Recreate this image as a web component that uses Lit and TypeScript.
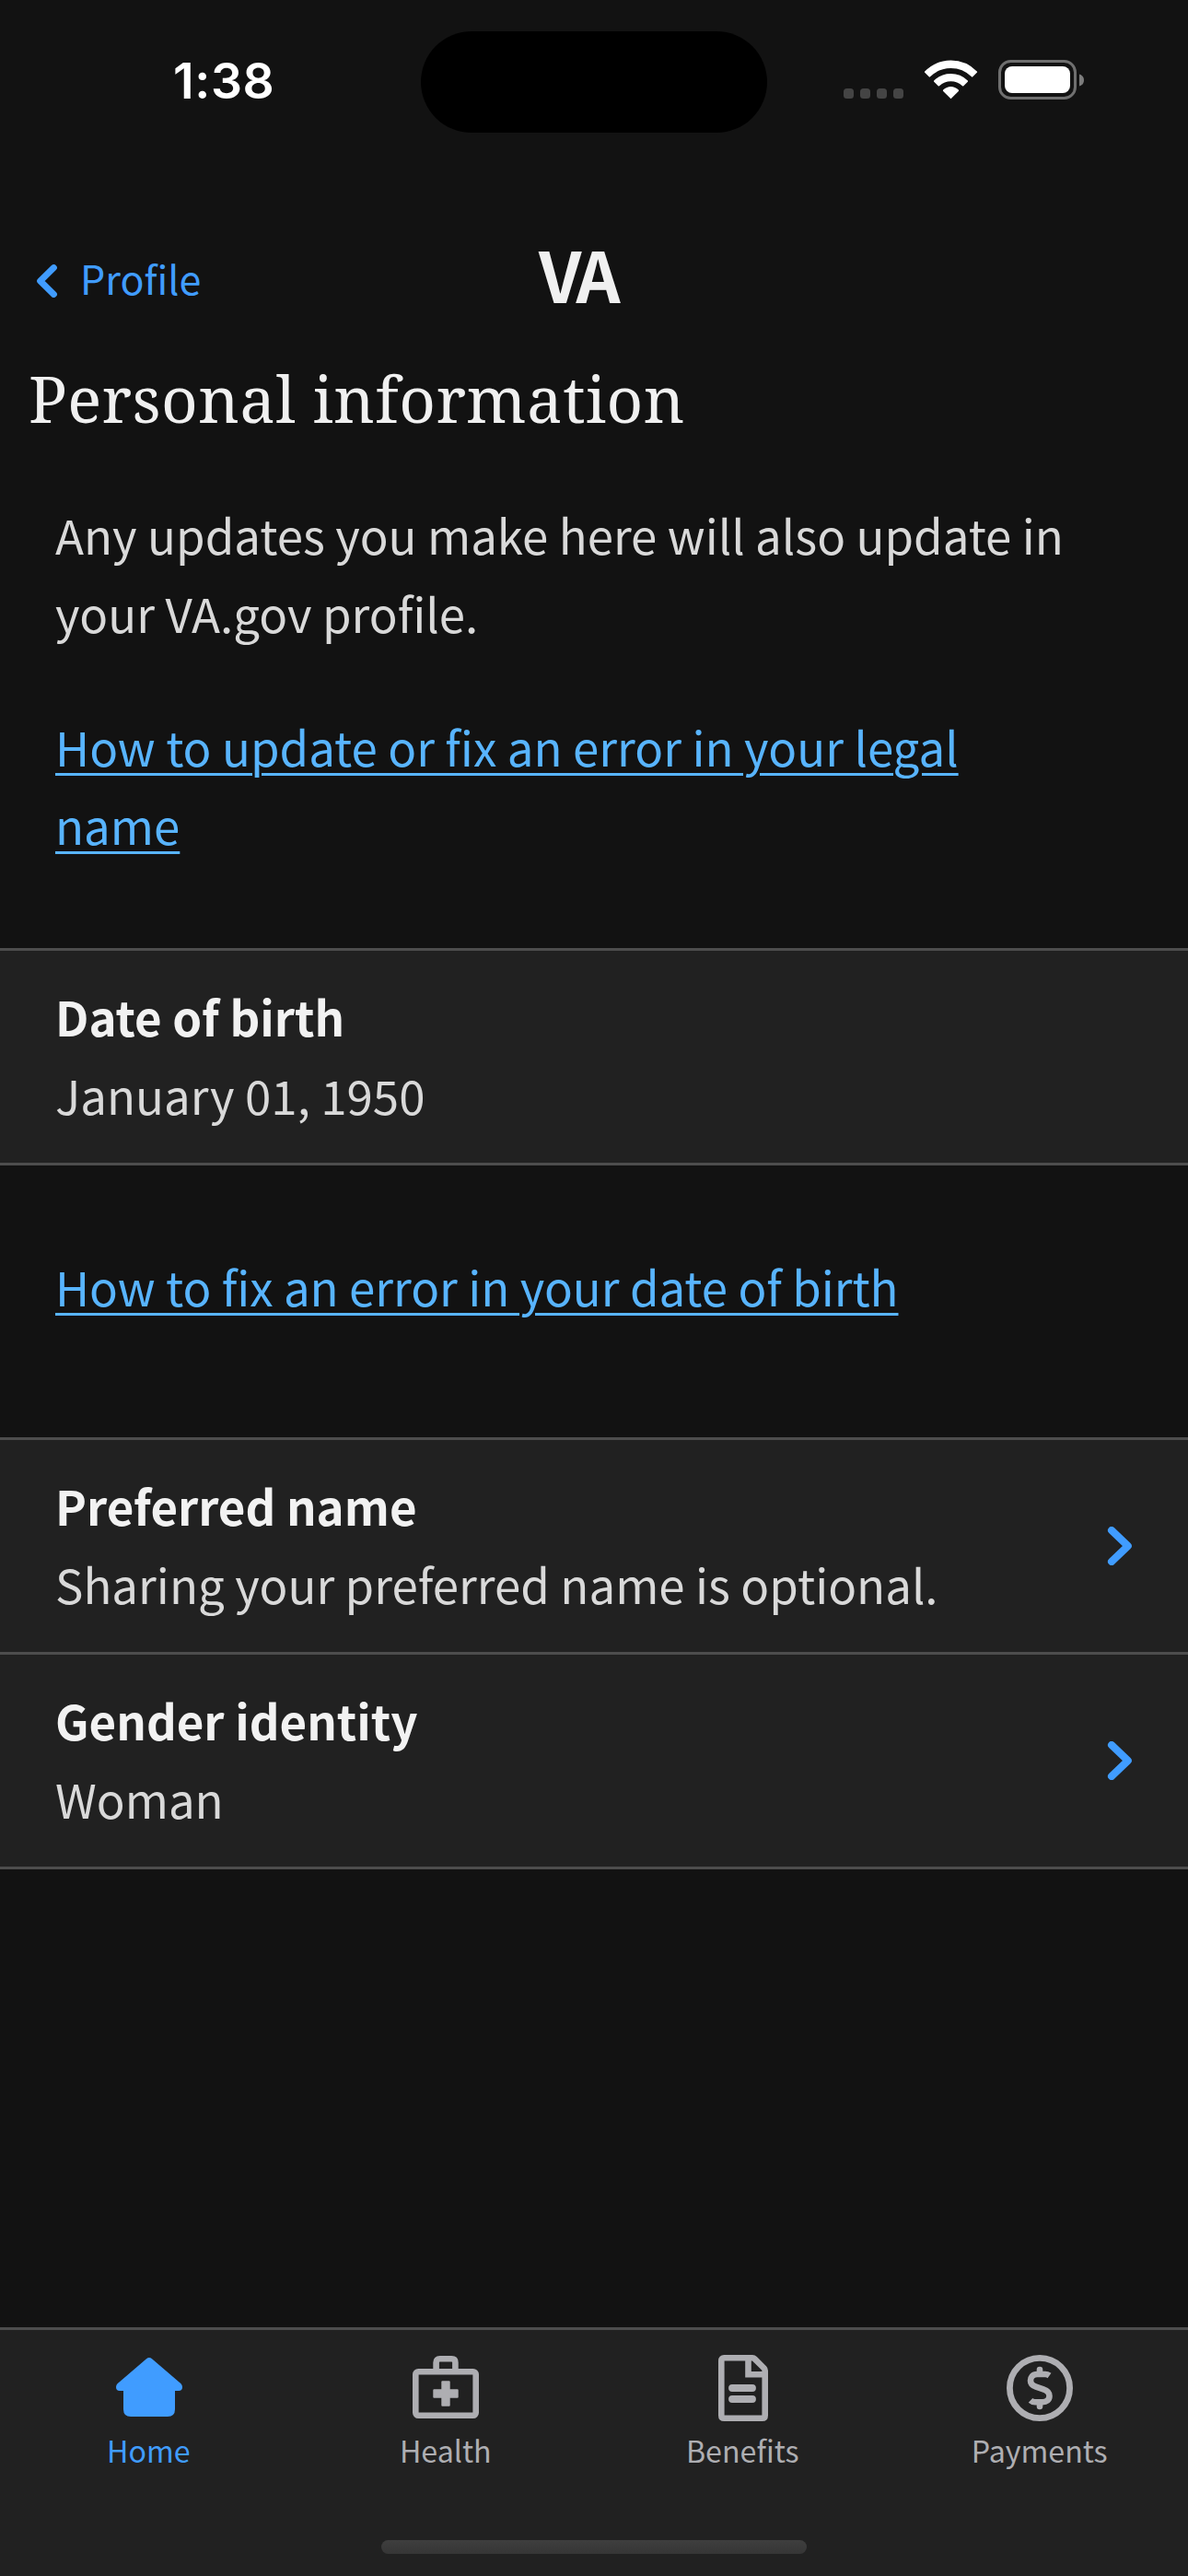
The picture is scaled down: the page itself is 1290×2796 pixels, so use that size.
import { LitElement, html, css, svg } from "lit";
import { customElement, property, state } from "lit/decorators.js";
import { classMap } from "lit/directives/class-map.js";

interface Row {
  label: string;
  value: string;
  link?: boolean;
}

const icons = {
  home: svg`<path fill="currentColor" d="M33 4.300q3-2.600 6 0l31.500 27Q72 32.800 72 35q0 4-4 4H64V59q0 8-8 8H16q-8 0-8-8V39H4q-4 0-4-4Q0 32.800 1.500 31.300Z"/>`,
  health: svg`<g fill="none" stroke="currentColor" stroke-width="6.600"><rect x="3.300" y="18.300" width="65.400" height="47.400" rx="3"/><path d="M25.600 17V8.300q0-4 4-4H42.400q4 0 4 4V17"/></g><path fill="currentColor" d="M32.300 28.300h7.400q1 0 1 1v8h8q1 0 1 1v7.400q0 1-1 1h-8v8q0 1-1 1h-7.400q-1 0-1-1v-8h-8q-1 0-1-1v-7.400q0-1 1-1h8v-8q0-1 1-1Z"/>`,
  benefits: svg`<g fill="none" stroke="currentColor" stroke-width="6.600"><path d="M15.300 3.300H46q1.500 0 2.500 1L58.700 14.500q1 1 1 2.500V65.700q0 3-3 3H15.300q-3 0-3-3V6.300q0-3 3-3Z"/><path d="M41.500 3V21.300H59" /></g><path d="M24 36H46M24 48H46" stroke="currentColor" stroke-width="7.800" stroke-linecap="round"/>`,
  payments: svg`<circle cx="36" cy="36" r="32.600" fill="none" stroke="currentColor" stroke-width="6.800"/><g fill="none" stroke="currentColor" stroke-width="6.600"><path stroke-linecap="round" d="M36 16V20M36 52.500V56"/><path stroke-linejoin="round" d="M46.500 22.500Q44.500 21 42 21H33.500C28 21 26 24.500 26 28C26 32 28.500 33.500 32 34.700L40 37.300C44 38.600 46.500 40.500 46.500 44.500C46.500 49 43.500 51.200 39 51.200H31Q28 51.200 26 49.300"/></g>`,
};

@customElement("status-bar")
class StatusBar extends LitElement {
  static styles = css`
    :host {
      display: grid;
      grid-template-columns: 457px 376px 1fr;
      height: 177px;
      box-sizing: border-box;
      padding-top: 34px;
      align-items: start;
    }
    .time {
      padding-left: 188px;
      margin-top: 22px;
      font: 600 53.500px/64px Inter, "Liberation Sans", sans-serif;
      letter-spacing: 0.6px;
      color: #fff;
    }
    .island {
      height: 110px;
      border-radius: 55px;
      background: #000;
    }
    .status {
      display: flex;
      margin: 31px 0 0 83px;
    }
    svg {
      display: block;
    }
  `;
  render() {
    return html`
      <div class="time">1:38</div>
      <div class="island"></div>
      <div class="status">
        <svg width="262" height="43" viewBox="0 0 262 43">
          <g fill="#444">
            <rect x="0" y="31" width="11" height="11" rx="3.500" />
            <rect x="18" y="31" width="11" height="11" rx="3.500" />
            <rect x="36" y="31" width="11" height="11" rx="3.500" />
            <rect x="54" y="31" width="11" height="11" rx="3.500" />
          </g>
          <g fill="#fff">
            <path d="M116.500 42.300L108.200 34Q107.500 33.300 108.200 32.600Q112 29 116.500 29T124.800 32.600Q125.500 33.300 124.800 34Z" />
            <path d="M98.200 22.400Q106 15 116.500 15T134.800 22.400Q135.500 23 134.800 23.700L130.300 28.200Q129.600 28.800 129 28.200Q123.500 23.200 116.500 23.200T104 28.200Q103.400 28.800 102.700 28.200L98.200 23.700Q97.500 23 98.200 22.400Z" />
            <path d="M88.200 12.500Q100 0.500 116.500 0.500T144.800 12.500Q145.500 13.200 144.800 13.800L140.300 18.300Q139.600 19 139 18.300Q129.500 9 116.500 9T94 18.300Q93.400 19 92.700 18.300L88.200 13.800Q87.500 13.200 88.200 12.500Z" />
          </g>
          <rect x="169.500" y="1.500" width="82" height="40" rx="12" fill="none" stroke="#6f6f6f" stroke-width="3" />
          <rect x="175" y="7" width="71" height="29" rx="8" fill="#fff" />
          <path d="M256 15.500Q261 17 261 22T256 28.500Z" fill="#7c7c7c" />
        </svg>
      </div>
    `;
  }
}

@customElement("nav-header")
class NavHeader extends LitElement {
  static styles = css`
    :host {
      display: grid;
      grid-template-columns: 1fr auto 1fr;
      height: 210px;
      padding: 78px 36px 0 39px;
      box-sizing: border-box;
      align-items: start;
    }
    .back {
      display: flex;
      align-items: center;
      height: 68px;
      margin-top: 16px;
      color: #409cff;
      font-size: 43px;
      line-height: 60px;
    }
    .back span {
      align-self: flex-start;
      margin-left: 24px;
    }
    .logo {
      margin: 2px 39px 0 0;
      font-size: 75px;
      line-height: 80px;
      font-weight: 700;
      letter-spacing: -4.500px;
      color: #f0f0f0;
    }
  `;
  render() {
    return html`
      <div class="back">
        <svg width="24" height="36" viewBox="0 0 24 36">
          <path d="M19.400 3.600L4.700 18L19.400 32.400" fill="none" stroke="currentColor" stroke-width="7" stroke-linecap="round" stroke-linejoin="round" />
        </svg>
        <span>Profile</span>
      </div>
      <div class="logo">VA</div>
    `;
  }
}

@customElement("info-list")
class InfoList extends LitElement {
  @property({ attribute: false }) rows: Row[] = [];
  static styles = css`
    :host {
      display: block;
      border-top: 3px solid #4d4d4d;
      background: #212121;
    }
    .row {
      display: flex;
      align-items: center;
      justify-content: space-between;
      height: 230px;
      padding: 0 60px;
      border-bottom: 3px solid #4d4d4d;
    }
    .text {
      padding-bottom: 2px;
      color: #d9d9d9;
    }
    .label {
      font-weight: 700;
      color: #f2f2f2;
    }
  `;
  render() {
    return this.rows.map(
      (r) => html`
        <div class="row">
          <div class="text">
            <div class="label">${r.label}</div>
            <div>${r.value}</div>
          </div>
          ${r.link
            ? html`<svg width="28" height="42" viewBox="0 0 28 42">
                <path d="M5 4L22.800 21L5 38" fill="none" stroke="#409cff" stroke-width="8" stroke-linecap="round" stroke-linejoin="round" />
              </svg>`
            : ""}
        </div>
      `
    );
  }
}

@customElement("tab-bar")
class TabBar extends LitElement {
  @state() private active = "Home";
  private tabs = [
    { name: "Home", icon: icons.home },
    { name: "Health", icon: icons.health },
    { name: "Benefits", icon: icons.benefits },
    { name: "Payments", icon: icons.payments },
  ];
  static styles = css`
    :host {
      display: flex;
      flex-direction: column;
      height: 270px;
      box-sizing: border-box;
      border-top: 3px solid #4d4d4d;
      background: #212121;
    }
    .tabs {
      display: grid;
      grid-template-columns: repeat(4, 1fr);
      flex: 1;
    }
    .tab {
      display: flex;
      flex-direction: column;
      align-items: center;
      padding-top: 27px;
      color: #aeaeb2;
      font-size: 32.200px;
      line-height: 44px;
    }
    .tab svg {
      display: block;
      margin: 0 0 9px 1px;
    }
    .active {
      color: #409cff;
    }
    .indicator {
      align-self: center;
      width: 462px;
      height: 15px;
      margin-bottom: 24px;
      border-radius: 8px;
      background: linear-gradient(#3e3e3e, #363636);
    }
  `;
  render() {
    return html`
      <div class="tabs">
        ${this.tabs.map(
          (t) => html`
            <div class=${classMap({ tab: true, active: t.name === this.active })} @click=${() => (this.active = t.name)}>
              <svg width="72" height="72" viewBox="0 0 72 72">${t.icon}</svg>
              <span>${t.name}</span>
            </div>
          `
        )}
      </div>
      <div class="indicator"></div>
    `;
  }
}

@customElement("app-root")
class AppRoot extends LitElement {
  private birth: Row[] = [{ label: "Date of birth", value: "January 01, 1950" }];
  private identity: Row[] = [
    { label: "Preferred name", value: "Sharing your preferred name is optional.", link: true },
    { label: "Gender identity", value: "Woman", link: true },
  ];
  static styles = css`
    :host {
      display: flex;
      flex-direction: column;
      width: 1290px;
      height: 2796px;
      overflow: hidden;
      background: #121212;
      font: 400 51px/85px "Noto Sans CJK SC", "Open Sans", sans-serif;
    }
    h1 {
      margin: 0 0 61px;
      padding-left: 31px;
      font: 400 69px/90px "Noto Serif", "DejaVu Serif Condensed", serif;
      letter-spacing: 0.450px;
      color: #f0f0f0;
    }
    p {
      margin: 0 60px 60px;
      color: #d9d9d9;
    }
    .link {
      align-self: flex-start;
      color: #58b4ff;
      text-decoration: underline 3px;
      text-underline-offset: 7px;
    }
    .name {
      margin: 0 200px 91px 60px;
    }
    .dob {
      margin: 89px 60px 121px;
      letter-spacing: -0.040px;
    }
    main {
      display: flex;
      flex-direction: column;
      flex: 1;
    }
  `;
  render() {
    return html`
      <status-bar></status-bar>
      <nav-header></nav-header>
      <main>
        <h1>Personal information</h1>
        <p>Any updates you make here will also update in your VA.gov profile.</p>
        <a class="link name">How to update or fix an error in your legal name</a>
        <info-list .rows=${this.birth}></info-list>
        <a class="link dob">How to fix an error in your date of birth</a>
        <info-list .rows=${this.identity}></info-list>
      </main>
      <tab-bar></tab-bar>
    `;
  }
}
